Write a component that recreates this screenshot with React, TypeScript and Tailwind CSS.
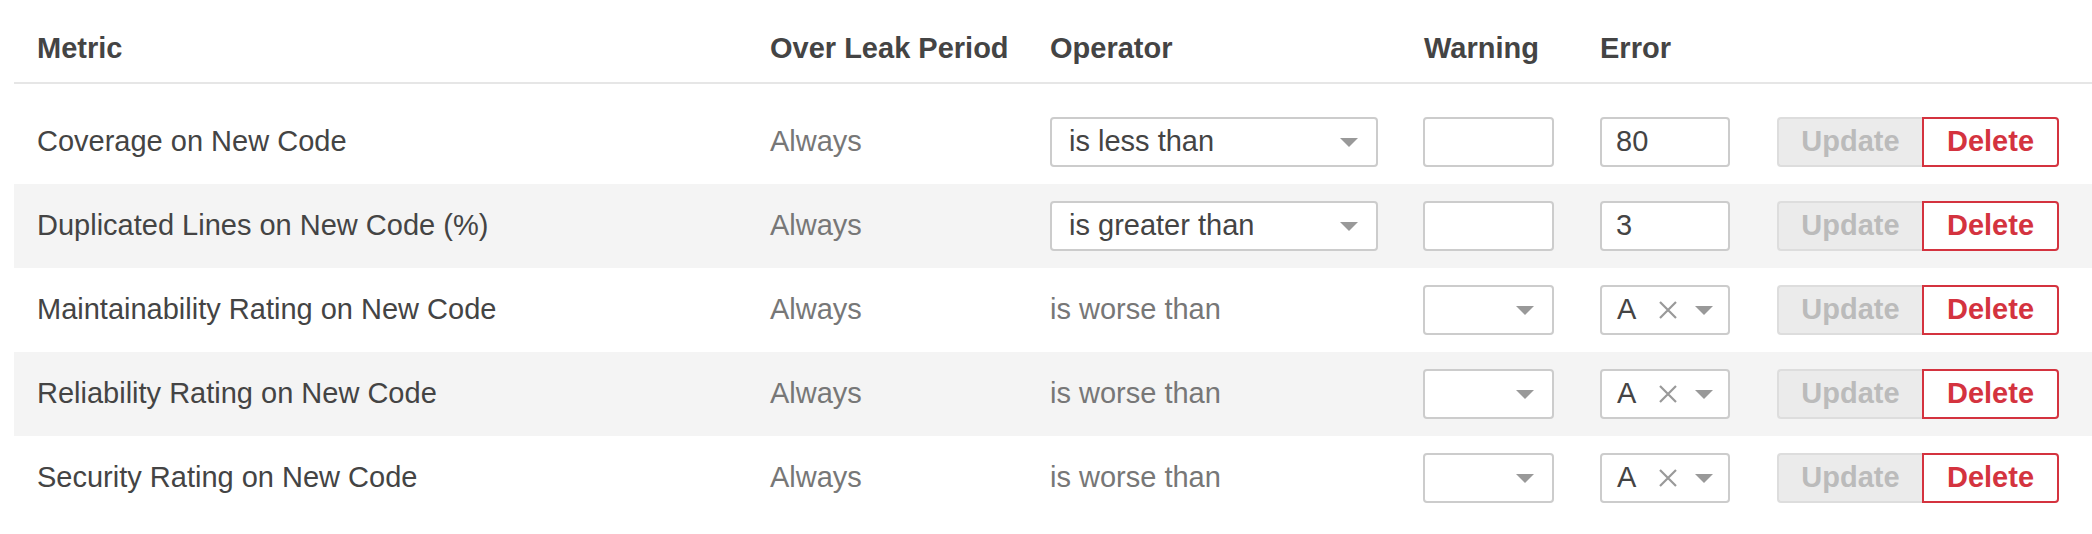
const Arrow = () => (
  <span className="inline-block w-0 h-0 border-l-[9px] border-r-[9px] border-t-[9px] border-l-transparent border-r-transparent border-t-[#999]" />
);

const Clear = () => (
  <svg width="20" height="20" viewBox="0 0 20 20" className="shrink-0">
    <path d="M2 2 L18 18 M18 2 L2 18" stroke="#999999" strokeWidth="2.2" fill="none" />
  </svg>
);

type Row = {
  metric: string;
  operator: string;
  editableOperator: boolean;
  error: string;
  rating: boolean;
};

const rows: Row[] = [
  { metric: "Coverage on New Code", operator: "is less than", editableOperator: true, error: "80", rating: false },
  { metric: "Duplicated Lines on New Code (%)", operator: "is greater than", editableOperator: true, error: "3", rating: false },
  { metric: "Maintainability Rating on New Code", operator: "is worse than", editableOperator: false, error: "A", rating: true },
  { metric: "Reliability Rating on New Code", operator: "is worse than", editableOperator: false, error: "A", rating: true },
  { metric: "Security Rating on New Code", operator: "is worse than", editableOperator: false, error: "A", rating: true },
];

const box = "h-[50px] border-2 border-[#cccccc] rounded-[4px] bg-white flex items-center";

export default function App() {
  return (
    <div className="w-[2092px] h-[534px] bg-white overflow-hidden font-['Liberation_Sans',Arial,sans-serif] text-[29px] text-[#444444]">
      <div className="ml-[14px]">
        <div className="flex items-center h-[84px] border-b-2 border-[#e6e6e6] pl-[23px] pt-[16px] font-bold">
          <div className="w-[733px]">Metric</div>
          <div className="w-[280px]">Over Leak Period</div>
          <div className="w-[374px]">Operator</div>
          <div className="w-[176px]">Warning</div>
          <div className="w-[177px]">Error</div>
        </div>
        <div className="pt-[16px]">
          {rows.map((r, i) => (
            <div
              key={r.metric}
              className={`flex items-center h-[84px] pl-[23px] ${i % 2 === 1 ? "bg-[#f4f4f4]" : "bg-white"}`}
            >
              <div className="w-[733px]">{r.metric}</div>
              <div className="w-[280px] text-[#777777]">Always</div>
              <div className="w-[374px]">
                {r.editableOperator ? (
                  <div className={`${box} w-[328px] justify-between pl-[17px] pr-[18px]`}>
                    <span>{r.operator}</span>
                    <Arrow />
                  </div>
                ) : (
                  <span className="text-[#777777]">{r.operator}</span>
                )}
              </div>
              <div className="w-[176px] -ml-[1px]">
                {r.rating ? (
                  <div className={`${box} w-[131px] justify-end pr-[18px]`}>
                    <Arrow />
                  </div>
                ) : (
                  <div className={`${box} w-[131px]`} />
                )}
              </div>
              <div className="w-[177px] ml-[1px]">
                {r.rating ? (
                  <div className={`${box} w-[130px] pl-[15px]`}>
                    <span className="w-[41px]">{r.error}</span>
                    <Clear />
                    <span className="ml-[17px] flex">
                      <Arrow />
                    </span>
                  </div>
                ) : (
                  <div className={`${box} w-[130px] pl-[14px]`}>{r.error}</div>
                )}
              </div>
              <div className="flex font-bold">
                <button className="w-[145px] h-[50px] bg-[#ebebeb] border-2 border-r-0 border-[#dddddd] rounded-l-[4px] text-[#bbbbbb]">
                  Update
                </button>
                <button className="w-[137px] h-[50px] bg-white border-2 border-[#d4333f] rounded-r-[4px] text-[#d4333f]">
                  Delete
                </button>
              </div>
            </div>
          ))}
        </div>
      </div>
    </div>
  );
}
